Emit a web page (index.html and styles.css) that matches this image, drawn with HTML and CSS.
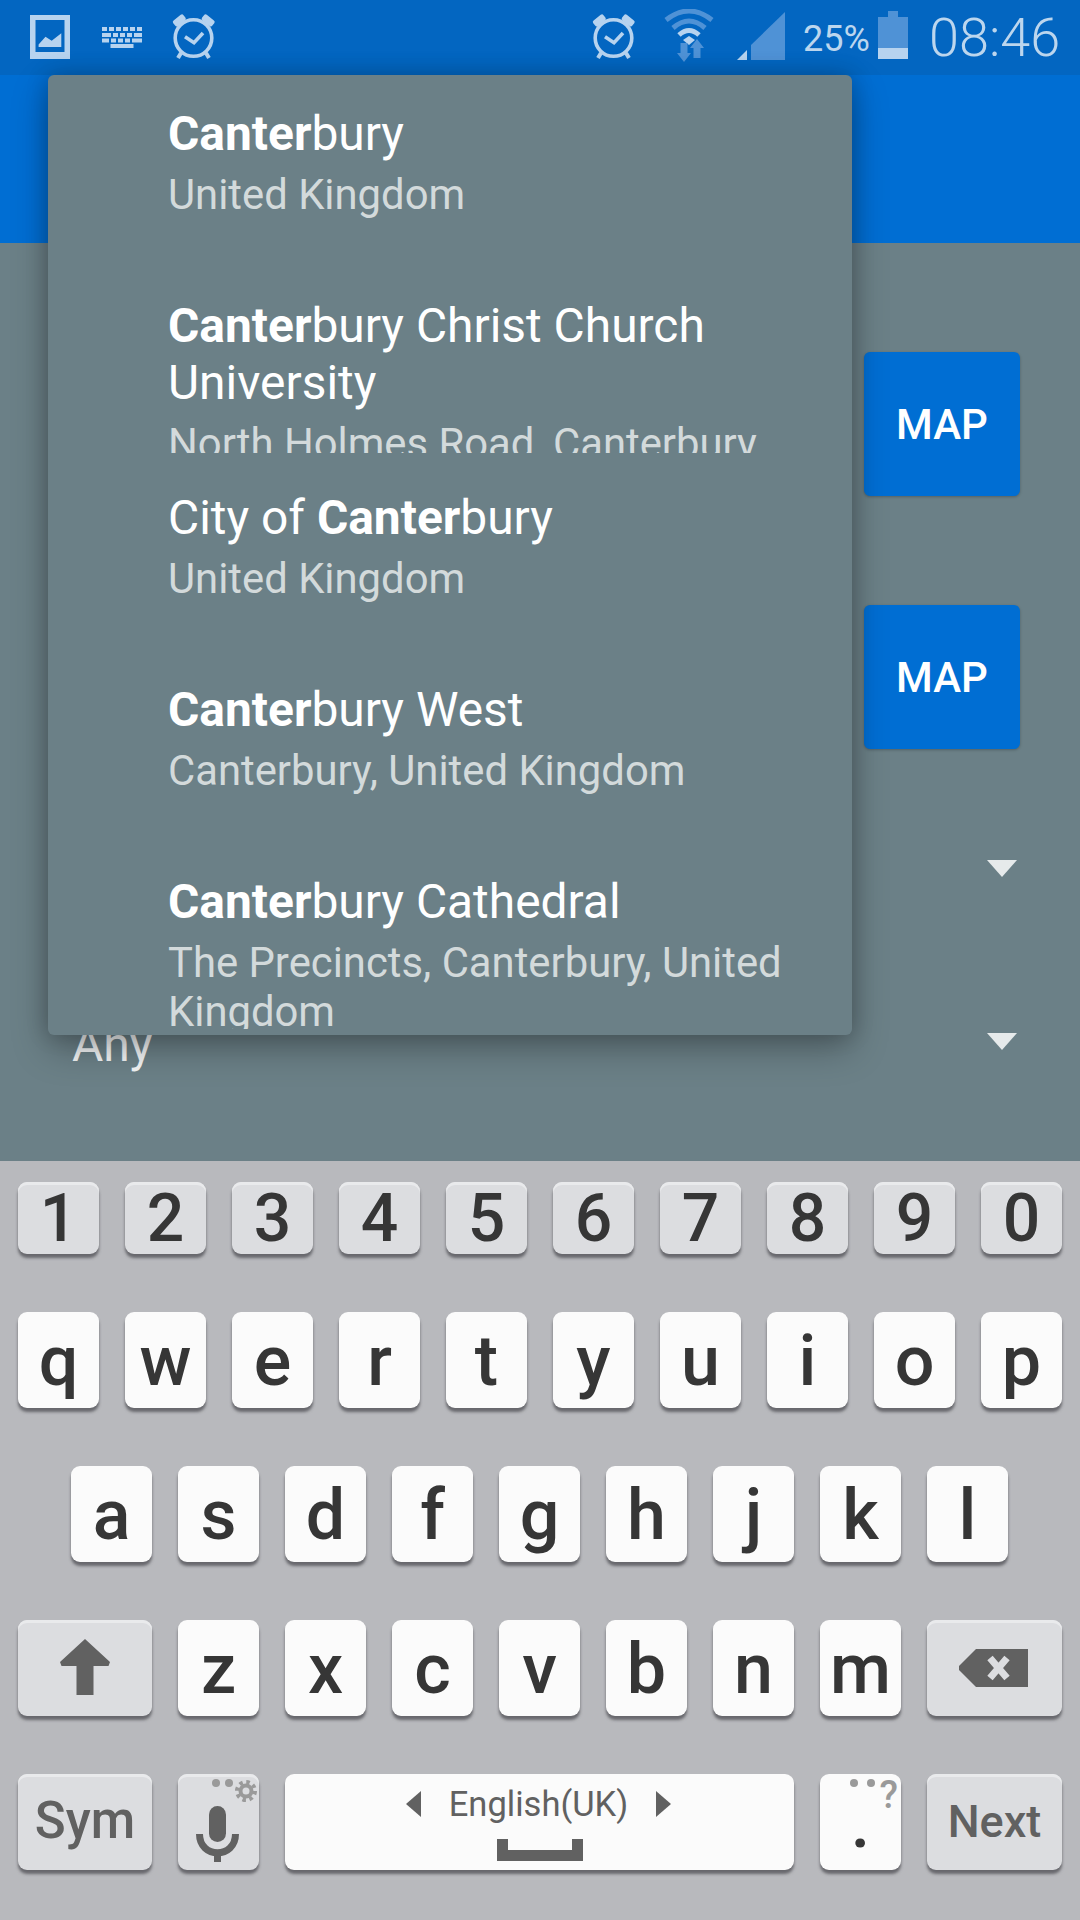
FILE: index.html
```html
<!DOCTYPE html>
<html lang="en">
<head>
<meta charset="utf-8">
<title>Place search</title>
<link rel="stylesheet" href="styles.css">
</head>
<body>
<div class="screen">
  <header class="status">
    <div class="status-left">
      <svg class="ic-pic" width="40" height="44" viewBox="0 0 40 44"><path class="lit" fill-rule="evenodd" d="M0 0H40V44H0ZM5.5 5V37H34.5V5Z"/><path class="lit" d="M8.6 32V29.5L15.5 21.7 21.7 25.7 31.3 18.3V32Z"/></svg>
      <svg class="ic-kbd" width="40" height="21" viewBox="0 0 40 21"><g class="lit"><rect x="0" y="0" width="5" height="4"/><rect x="7" y="0" width="5" height="4"/><rect x="14" y="0" width="5" height="4"/><rect x="21" y="0" width="5" height="4"/><rect x="28" y="0" width="5" height="4"/><rect x="35" y="0" width="5" height="4"/><rect x="0" y="6" width="9" height="4"/><rect x="11" y="6" width="5" height="4"/><rect x="18" y="6" width="5" height="4"/><rect x="25" y="6" width="5" height="4"/><rect x="32" y="6" width="8" height="4"/><rect x="0" y="11.5" width="7" height="4"/><rect x="9" y="11.5" width="5" height="4"/><rect x="16" y="11.5" width="5" height="4"/><rect x="23" y="11.5" width="5" height="4"/><rect x="30" y="11.5" width="10" height="4"/><rect x="8.5" y="17" width="23" height="4"/></g></svg>
      <svg class="ic-alarm-left" width="44" height="47" viewBox="0 0 44 47"><g class="lit-line"><circle cx="21.5" cy="25" r="18.3" stroke-width="3.6"/><path d="M13 23.7 22 29.7 31 20" stroke-width="3.6"/><path d="M9 40 6 45M34 40 37 45" stroke-width="4"/></g><g class="lit"><rect x="0.5" y="4" width="13" height="7" rx="2" transform="rotate(-38 7 7)"/><rect x="30" y="4" width="13" height="7" rx="2" transform="rotate(38 36.5 7)"/></g></svg>
    </div>
    <div class="status-right">
      <svg class="ic-alarm" width="44" height="47" viewBox="0 0 44 47"><g class="lit-line"><circle cx="21.5" cy="25" r="18.3" stroke-width="3.6"/><path d="M13 23.7 22 29.7 31 20" stroke-width="3.6"/><path d="M9 40 6 45M34 40 37 45" stroke-width="4"/></g><g class="lit"><rect x="0.5" y="4" width="13" height="7" rx="2" transform="rotate(-38 7 7)"/><rect x="30" y="4" width="13" height="7" rx="2" transform="rotate(38 36.5 7)"/></g></svg>
      <svg class="ic-wifi" width="50" height="53" viewBox="0 0 50 53"><g class="dim-line"><path d="M2 11Q25-7 48 11" stroke-width="5"/><path d="M9 19Q25 5 41 19" stroke-width="5"/></g><path class="lit-line" d="M15 26Q25 17 35 26" stroke-width="5"/><path class="lit" d="M19 31 25 27 31 31 25 36Z"/><path class="dim" d="M16.500 34H23.500V44H27L20 53 13 44H16.500ZM33 30 40 39H36.500V49H29.500V39H26Z"/></svg>
      <svg class="ic-signal" width="48" height="48" viewBox="0 0 48 48"><path class="dim" d="M14 33 48 0V48H14Z"/><path class="lit" d="M0 48 10 38V48Z"/></svg>
      <span class="pct">25%</span>
      <svg class="ic-batt" width="30" height="48" viewBox="0 0 30 48"><path class="dim" d="M10 0H20V6H30V37H0V6H10Z"/><rect class="lit" x="0" y="37" width="30" height="11"/></svg>
      <span class="clock">08:46</span>
    </div>
  </header>
  <div class="appbar"></div>
  <main class="form">
    <div class="map-row"><button class="map-btn">MAP</button></div>
    <div class="map-row map-row-second"><button class="map-btn">MAP</button></div>
    <div class="select select-first"><span>Any</span><i class="caret"></i></div>
    <div class="select select-second"><span>Any</span><i class="caret"></i></div>
  </main>
  <section class="keyboard">
    <div class="kb-row kb-num">
      <div class="key num">1</div><div class="key num">2</div><div class="key num">3</div><div class="key num">4</div><div class="key num">5</div><div class="key num">6</div><div class="key num">7</div><div class="key num">8</div><div class="key num">9</div><div class="key num">0</div>
    </div>
    <div class="kb-row">
      <div class="key">q</div><div class="key">w</div><div class="key">e</div><div class="key">r</div><div class="key">t</div><div class="key">y</div><div class="key">u</div><div class="key">i</div><div class="key">o</div><div class="key">p</div>
    </div>
    <div class="kb-row kb-home">
      <div class="key">a</div><div class="key">s</div><div class="key">d</div><div class="key">f</div><div class="key">g</div><div class="key">h</div><div class="key">j</div><div class="key">k</div><div class="key">l</div>
    </div>
    <div class="kb-row">
      <div class="key fn wide"><svg width="134" height="96" viewBox="0 0 134 96"><path class="glyph" d="M42 42 67 19 92 42 90.500 46H75.500V75H58.500V46H43.500Z"/></svg></div>
      <div class="key">z</div><div class="key">x</div><div class="key">c</div><div class="key">v</div><div class="key">b</div><div class="key">n</div><div class="key">m</div>
      <div class="key fn wide-end"><svg width="135" height="96" viewBox="0 0 135 96"><path class="glyph" d="M49 29H101V67H49L32 50V46Z"/><path class="x-mark" d="M63 38 80 58M80 38 63 58"/></svg></div>
    </div>
    <div class="kb-row">
      <div class="key fn wide sym">Sym</div>
      <div class="key fn mic"><svg width="81" height="96" viewBox="0 0 81 96"><circle class="hint" cx="38" cy="9" r="4"/><circle class="hint" cx="51" cy="9" r="4"/><circle class="gear" cx="68" cy="17" r="5.500" stroke-width="4"/><circle class="gear" cx="68" cy="17" r="9" stroke-width="4" stroke-dasharray="3.500 3.570"/><rect class="glyph" x="31" y="32" width="17" height="36" rx="8.500"/><path class="mic-arc" d="M21.500 60C21.500 85 57.500 85 57.500 60"/><rect class="glyph" x="36" y="78" width="7" height="10"/></svg></div>
      <div class="key space">
        <div class="lang"><i class="tri tri-left"></i><span>English(UK)</span><i class="tri tri-right"></i></div>
        <svg class="bar" width="86" height="22" viewBox="0 0 86 22"><path class="glyph" d="M0 0H11V11H75V0H86V22H0Z"/></svg>
      </div>
      <div class="key dot">.<span class="dot-hint"><i></i><i></i><b>?</b></span></div>
      <div class="key fn wide-end next">Next</div>
    </div>
  </section>
  <div class="popup">
    <div class="item"><div class="item-body"><div class="title"><b>Canter</b>bury</div><div class="sub">United Kingdom</div></div></div>
    <div class="item"><div class="item-body"><div class="title"><b>Canter</b>bury Christ Church University</div><div class="sub">North Holmes Road, Canterbury</div></div></div>
    <div class="item"><div class="item-body"><div class="title">City of <b>Canter</b>bury</div><div class="sub">United Kingdom</div></div></div>
    <div class="item"><div class="item-body"><div class="title"><b>Canter</b>bury West</div><div class="sub">Canterbury, United Kingdom</div></div></div>
    <div class="item"><div class="item-body"><div class="title"><b>Canter</b>bury Cathedral</div><div class="sub">The Precincts, Canterbury, United Kingdom</div></div></div>
  </div>
</div>
</body>
</html>
```
FILE: styles.css
```css
* { box-sizing: border-box; }
html, body { margin: 0; padding: 0; }
body { font-family: Roboto, "Liberation Sans", sans-serif; background: #b8b9bd; }
.screen { position: relative; width: 1080px; height: 1920px; overflow: hidden; display: flex; flex-direction: column; }

.lit { fill: #b7d3ef; }
.dim { fill: #4f92d6; }
.lit-line { fill: none; stroke: #b7d3ef; }
.dim-line { fill: none; stroke: #4f92d6; }

.status { height: 75px; flex: none; background: #0366c1; display: flex; justify-content: space-between; align-items: flex-start; padding: 0 22px 0 30px; color: #bcd6ee; }
.status-left { display: flex; align-items: flex-start; }
.status-left svg, .status-right svg { display: block; }
.ic-pic { margin: 15px 32px 0 0; }
.ic-kbd { margin: 27px 30px 0 0; }
.ic-alarm-left { margin-top: 13px; }
.status-right { display: flex; align-items: flex-start; }
.ic-alarm { margin: 13px 28px 0 0; }
.ic-wifi { margin: 9px 23px 0 0; }
.ic-signal { margin: 12px 18px 0 0; }
.pct { font-size: 36px; line-height: 40px; margin: 19px 10px 0 0; width: 65px; white-space: nowrap; }
.ic-batt { margin: 11px 21px 0 0; }
.clock { font-size: 54px; font-weight: 300; line-height: 60px; margin-top: 8px; width: 129px; white-space: nowrap; }

.appbar { height: 168px; flex: none; background: #006ed3; }

.form { height: 918px; flex: none; background: #6b8087; padding: 109px 60px 0 72px; color: #f2f4f5; }
.map-row { display: flex; justify-content: flex-end; }
.map-row-second { margin-top: 109px; }
.map-btn { width: 156px; height: 144px; border: 0; border-radius: 6px; background: #006ed3; color: #fff; font: 500 42px Roboto, sans-serif; box-shadow: 0 1px 3px rgba(0,0,0,.25); padding: 0; }
.select { display: flex; justify-content: space-between; align-items: flex-start; height: 60px; margin-right: 3px; font-size: 48px; line-height: 60px; }
.select-first { margin-top: 93px; }
.select-second { margin-top: 113px; }
.caret { width: 0; height: 0; margin-top: 18px; border-left: 15px solid transparent; border-right: 15px solid transparent; border-top: 17px solid #e6eaeb; }

.keyboard { flex: 1; background: #b8b9bd; padding: 21px 18px 0; display: flex; flex-direction: column; gap: 58px; }
.kb-row { display: flex; gap: 26px; height: 96px; }
.kb-num { height: 72px; }
.kb-home { padding-left: 53px; }
.key { flex: none; width: 81px; height: 100%; background: #fbfbfb; border-radius: 9px; box-shadow: 0 4px 3px rgba(70,70,75,.7); color: #363636; font-size: 70px; font-weight: 500; line-height: 98px; text-align: center; position: relative; }
.key svg { display: block; }
.num { background: #dcdde0; box-shadow: inset 0 3px 0 #e9eaec, 0 4px 3px rgba(70,70,75,.7); font-size: 66px; font-weight: 500; line-height: 73px; }
.fn { background: #dcdde0; box-shadow: inset 0 3px 0 #e9eaec, 0 4px 3px rgba(70,70,75,.7); color: #616161; }
.wide { width: 134px; }
.wide-end { width: 135px; }
.sym { font-size: 51px; font-weight: 500; line-height: 94px; }
.next { font-size: 45px; font-weight: 500; line-height: 96px; }
.glyph { fill: #616161; }
.x-mark { fill: none; stroke: #dcdde0; stroke-width: 7; }
.hint { fill: #9a9a9a; }
.gear { fill: none; stroke: #9a9a9a; }
.mic-arc { fill: none; stroke: #616161; stroke-width: 7; }
.space { width: 509px; display: flex; flex-direction: column; align-items: center; }
.lang { display: flex; align-items: center; height: 36px; margin-top: 12px; padding-right: 2px; gap: 28px; color: #616161; font-size: 34.500px; font-weight: 400; line-height: 36px; }
.tri { width: 0; height: 0; border-top: 13px solid transparent; border-bottom: 13px solid transparent; }
.tri-left { border-right: 15px solid #616161; }
.tri-right { border-left: 15px solid #616161; }
.bar { margin-top: 17px; }
.dot-hint { position: absolute; top: 0; left: 0; width: 100%; height: 40px; }
.dot-hint i { position: absolute; top: 5px; width: 8px; height: 8px; border-radius: 50%; background: #9a9a9a; }
.dot-hint i:nth-child(1) { left: 30px; }
.dot-hint i:nth-child(2) { left: 47px; }
.dot-hint b { position: absolute; top: 2px; right: 3px; font-size: 38px; font-weight: 500; line-height: 38px; color: #9a9a9a; }

.popup { position: absolute; left: 48px; top: 75px; width: 804px; height: 960px; background: #6b8087; border-radius: 6px; box-shadow: 0 14px 36px rgba(0,0,0,.28), 0 0 22px rgba(0,0,0,.2); overflow: hidden; color: #fff; }
.item { height: 192px; padding: 31px 48px 0 120px; }
.item-body { height: 155px; overflow: hidden; }
.title { font-size: 47.900px; line-height: 57px; }
.title b { font-weight: 700; }
.sub { margin-top: 7px; font-size: 41.800px; line-height: 49px; color: #d3dadb; }
```
